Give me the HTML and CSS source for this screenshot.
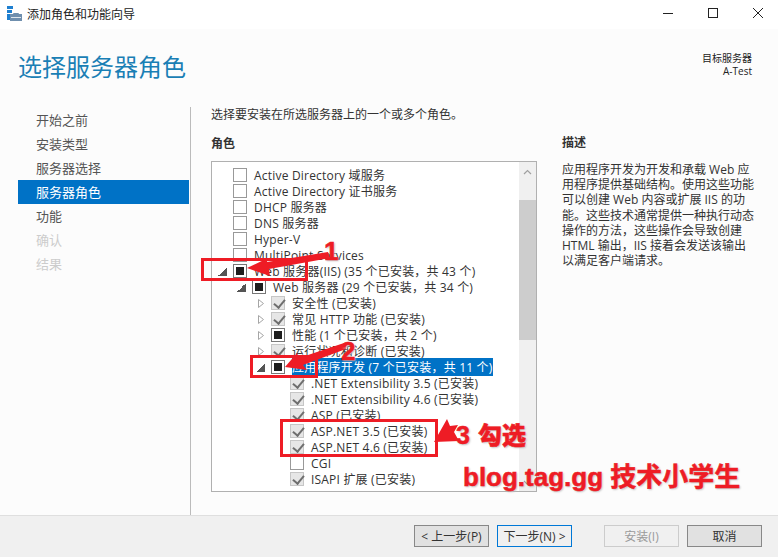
FILE: index.html
```html
<!DOCTYPE html>
<html lang="zh-CN">

<head>
    <meta charset="UTF-8">
    <title>添加角色和功能向导</title>
    <link rel="stylesheet" href="styles.css">
</head>

<body>
    <div class="window">
        <div class="titlebar">
            <svg class="app-icon" width="15" height="15" viewBox="0 0 15 15">
                <rect x="0" y="0" width="6" height="3" fill="#1e7fd0"/>
                <rect x="0" y="4" width="5" height="3" fill="#1e7fd0"/>
                <rect x="0" y="8" width="3" height="6" fill="#1e7fd0"/>
                <rect x="3" y="8" width="12" height="7" fill="#6f8fae"/>
                <path d="M6.5 10 V7.5 H11.5 V10" fill="none" stroke="#6f8fae" stroke-width="1"/>
                <rect x="4" y="11" width="10" height="1" fill="#dfe7ee"/>
            </svg>
            <span class="title-text">添加角色和功能向导</span>
            <div class="win-buttons">
                <svg width="12" height="12" viewBox="0 0 12 12"><path d="M1 6.5 H11" stroke="#222" fill="none"/></svg>
                <svg width="12" height="12" viewBox="0 0 12 12"><rect x="1.5" y="1.5" width="9" height="9" stroke="#222" fill="none"/></svg>
                <svg width="12" height="12" viewBox="0 0 12 12"><path d="M1 1 L11 11 M11 1 L1 11" stroke="#222" fill="none"/></svg>
            </div>
        </div>

        <div class="content">
            <div class="head">
                <h1>选择服务器角色</h1>
                <div class="target">
                    <div>目标服务器</div>
                    <div>A-Test</div>
                </div>
            </div>

            <div class="columns">
                <ul class="nav">
                    <li>开始之前</li>
                    <li>安装类型</li>
                    <li>服务器选择</li>
                    <li class="active">服务器角色</li>
                    <li>功能</li>
                    <li class="off">确认</li>
                    <li class="off">结果</li>
                </ul>

                <div class="main">
                    <p class="intro">选择要安装在所选服务器上的一个或多个角色。</p>
                    <div class="panes">
                        <div class="roles">
                            <h2>角色</h2>
                            <div class="listbox">
                                <div class="rows">
                                    <div class="row"><i class="arrow"></i><i class="box"></i><span>Active Directory 域服务</span></div>
                                    <div class="row"><i class="arrow"></i><i class="box"></i><span>Active Directory 证书服务</span></div>
                                    <div class="row"><i class="arrow"></i><i class="box"></i><span>DHCP 服务器</span></div>
                                    <div class="row"><i class="arrow"></i><i class="box"></i><span>DNS 服务器</span></div>
                                    <div class="row"><i class="arrow"></i><i class="box"></i><span>Hyper-V</span></div>
                                    <div class="row"><i class="arrow"></i><i class="box"></i><span>MultiPoint Services</span></div>
                                    <div class="row"><i class="arrow open"></i><i class="box mixed"></i><span>Web 服务器(IIS) (35 个已安装，共 43 个)</span></div>
                                    <div class="row lv1"><i class="arrow open"></i><i class="box mixed"></i><span>Web 服务器 (29 个已安装，共 34 个)</span></div>
                                    <div class="row lv2"><svg class="closed" width="6" height="9" viewBox="0 0 6 9"><path d="M.5 .5 L5.5 4.5 L.5 8.5 Z" fill="none" stroke="#a6a6a6"/></svg><i class="box checked"></i><span>安全性 (已安装)</span></div>
                                    <div class="row lv2"><svg class="closed" width="6" height="9" viewBox="0 0 6 9"><path d="M.5 .5 L5.5 4.5 L.5 8.5 Z" fill="none" stroke="#a6a6a6"/></svg><i class="box checked"></i><span>常见 HTTP 功能 (已安装)</span></div>
                                    <div class="row lv2"><svg class="closed" width="6" height="9" viewBox="0 0 6 9"><path d="M.5 .5 L5.5 4.5 L.5 8.5 Z" fill="none" stroke="#a6a6a6"/></svg><i class="box mixed"></i><span>性能 (1 个已安装，共 2 个)</span></div>
                                    <div class="row lv2"><svg class="closed" width="6" height="9" viewBox="0 0 6 9"><path d="M.5 .5 L5.5 4.5 L.5 8.5 Z" fill="none" stroke="#a6a6a6"/></svg><i class="box checked"></i><span>运行状况和诊断 (已安装)</span></div>
                                    <div class="row lv2"><i class="arrow open"></i><i class="box mixed"></i><span class="picked">应用程序开发 (7 个已安装，共 11 个)</span></div>
                                    <div class="row lv3"><i class="arrow"></i><i class="box checked"></i><span>.NET Extensibility 3.5 (已安装)</span></div>
                                    <div class="row lv3"><i class="arrow"></i><i class="box checked"></i><span>.NET Extensibility 4.6 (已安装)</span></div>
                                    <div class="row lv3"><i class="arrow"></i><i class="box checked"></i><span>ASP (已安装)</span></div>
                                    <div class="row lv3"><i class="arrow"></i><i class="box checked"></i><span>ASP.NET 3.5 (已安装)</span></div>
                                    <div class="row lv3"><i class="arrow"></i><i class="box checked"></i><span>ASP.NET 4.6 (已安装)</span></div>
                                    <div class="row lv3"><i class="arrow"></i><i class="box"></i><span>CGI</span></div>
                                    <div class="row lv3"><i class="arrow"></i><i class="box checked"></i><span>ISAPI 扩展 (已安装)</span></div>
                                </div>
                                <div class="scrollbar">
                                    <svg class="chev" width="9" height="6" viewBox="0 0 9 6"><path d="M1 5 L4.5 1.5 L8 5" fill="none" stroke="#a0a0a0" stroke-width="1.2"/></svg>
                                    <div class="thumb"></div>
                                    <svg class="chev bottom" width="9" height="6" viewBox="0 0 9 6"><path d="M1 1 L4.5 4.5 L8 1" fill="none" stroke="#a0a0a0" stroke-width="1.2"/></svg>
                                </div>
                            </div>
                        </div>
                        <div class="desc">
                            <h2>描述</h2>
                            <p>应用程序开发为开发和承载 Web 应用程序提供基础结构。使用这些功能可以创建 Web 内容或扩展 IIS 的功能。这些技术通常提供一种执行动态操作的方法，这些操作会导致创建 HTML 输出，IIS 接着会发送该输出以满足客户端请求。</p>
                        </div>
                    </div>
                </div>
            </div>
        </div>

        <div class="footer">
            <button class="btn">&lt; 上一步(P)</button>
            <button class="btn next">下一步(N) &gt;</button>
            <button class="btn gap" disabled>安装(I)</button>
            <button class="btn">取消</button>
        </div>
    </div>

    <!-- red marks painted on top of the screenshot -->
    <div class="mark m1"></div>
    <div class="mark m2"></div>
    <div class="mark m3"></div>
    <svg class="arrows" width="778" height="557" viewBox="0 0 778 557">
        <path d="M247 268 L268 258 L267 262 L328 252 L330 258 L269 269 L270 276 Z" fill="#ee1c25"/>
        <path d="M285 367 L297 353 L299 358 L344 343 L346 349 L303 365 L307 370 Z" fill="#ee1c25"/>
        <path d="M434 442 L447 419 L450 426 L458 425 L454 432 L459 441 Z" fill="#ee1c25"/>
    </svg>
    <span class="note n1">1</span>
    <span class="note n2">2</span>
    <span class="note n3">3<b class="n3-cjk">勾选</b></span>
    <span class="note n4">blog.tag.gg 技术小学生</span>
</body>

</html>
```

FILE: styles.css
```css
* {
    box-sizing: border-box;
}

body {
    margin: 0;
    width: 778px;
    height: 557px;
    overflow: hidden;
    position: relative;
    font-family: "Open Sans", "Noto Sans CJK SC", sans-serif;
    font-size: 12px;
    color: #333;
    background: #fcfcfc;
}

.window {
    height: 557px;
    display: flex;
    flex-direction: column;
}

.titlebar {
    height: 29px;
    flex: none;
    display: flex;
    align-items: center;
    padding: 0 0 2px 7px;
    background: #fff;
    color: #222;
}

.app-icon {
    margin-right: 5px;
}

.win-buttons {
    margin-left: auto;
    display: flex;
    gap: 33px;
    padding-right: 14px;
    margin-bottom: 1px;
}

.content {
    flex: 1;
    min-height: 0;
    padding: 0 0 0 18px;
}

.head {
    display: flex;
    justify-content: space-between;
    height: 78px;
}

h1 {
    margin: 20px 0 0;
    font-size: 24px;
    font-weight: 400;
    line-height: 36px;
    color: #1a7fb5;
}

.target {
    margin: 23px 26px 0 0;
    text-align: right;
    font-size: 10px;
    line-height: 13px;
    color: #222;
}

.columns {
    display: flex;
}

.nav {
    list-style: none;
    margin: 0;
    padding: 1px 0 0;
    width: 173px;
    height: 408px;
    border-right: 1px solid #bbb;
    font-size: 13px;
    color: #555;
}

.nav li {
    height: 24px;
    line-height: 24px;
    padding-left: 18px;
    width: 171px;
}

.nav .active {
    background: #0072c6;
    color: #fff;
}

.nav .off {
    color: #ccc;
}

.main {
    padding: 0 0 0 20px;
}

.intro {
    margin: 0;
    line-height: 16px;
    height: 24px;
}

.panes {
    display: flex;
}

h2 {
    margin: 0;
    font-size: 12px;
    font-weight: 700;
    line-height: 16px;
    color: #333;
}

.roles {
    width: 325px;
    padding-top: 5px;
}

.roles h2 {
    margin-bottom: 9px;
}

.listbox {
    display: flex;
    width: 326px;
    height: 331px;
    border: 1px solid #b0b0b0;
    background: #fff;
    overflow: hidden;
}

.rows {
    flex: 1;
    padding-top: 5px;
    overflow: hidden;
}

.row {
    height: 16px;
    display: flex;
    align-items: center;
    white-space: nowrap;
    padding-left: 6px;
    letter-spacing: 0.2px;
}

.lv1 {
    padding-left: 25px;
}

.lv2 {
    padding-left: 44px;
}

.lv3 {
    padding-left: 63px;
}

.arrow {
    width: 9px;
    height: 9px;
    margin-right: 6px;
    flex: none;
}

.arrow.open {
    background: linear-gradient(135deg, transparent 50%, #555 50%);
}

.closed {
    flex: none;
    margin: 0 7px 0 2px;
}

.box {
    width: 14px;
    height: 14px;
    flex: none;
    margin-right: 7px;
    border: 1px solid #999;
    background: #fff;
    position: relative;
}

.box.mixed {
    border-color: #777;
}

.box.mixed::after {
    content: "";
    position: absolute;
    left: 2px;
    top: 2px;
    width: 8px;
    height: 8px;
    background: #1e1e1e;
}

.box.checked {
    border-color: #c6c6c6;
    background: #e6e6e6;
}

.box.checked::after {
    content: "";
    position: absolute;
    left: 4px;
    top: 0;
    width: 5px;
    height: 9px;
    border: solid #6e6e6e;
    border-width: 0 2px 2px 0;
    transform: rotate(40deg);
}

.picked {
    background: #0072c6;
    color: #fff;
}

.scrollbar {
    width: 17px;
    flex: none;
    background: #f0f0f0;
    display: flex;
    flex-direction: column;
    align-items: center;
    padding: 7px 0 5px;
}

.thumb {
    align-self: stretch;
    height: 140px;
    margin-top: 25px;
    background: #cdcdcd;
}

.chev.bottom {
    margin-top: auto;
}

.desc {
    width: 195px;
    margin-left: 26px;
    padding-top: 4px;
}

.desc h2 {
    margin-bottom: 11px;
}

.desc p {
    margin: 0;
    line-height: 15.2px;
}

.footer {
    height: 42px;
    flex: none;
    display: flex;
    align-items: flex-start;
    padding: 9px 0 0 414px;
    gap: 8px;
    background: #f0f0f0;
    border-top: 1px solid #dfdfdf;
}

.btn {
    width: 75px;
    height: 22px;
    padding: 0;
    font: inherit;
    color: #333;
    background: #e1e1e1;
    border: 1px solid #888;
}

.btn.next {
    border-color: #0078d7;
    background: #f0f0f0;
}

.btn.gap {
    margin-left: 24px;
    background: #f0f0f0;
    border-color: #ccc;
    color: #9a9a9a;
}

/* annotation layer */
.mark {
    position: absolute;
    border: 3px solid #ee1c25;
}

.m1 {
    left: 201px;
    top: 258px;
    width: 107px;
    height: 23px;
}

.m2 {
    left: 250px;
    top: 355px;
    width: 68px;
    height: 23px;
}

.m3 {
    left: 280px;
    top: 419px;
    width: 158px;
    height: 38px;
}

.arrows {
    position: absolute;
    left: 0;
    top: 0;
}

.note {
    position: absolute;
    font-family: "Liberation Sans", "Noto Sans CJK SC", sans-serif;
    font-weight: 700;
    color: #ee1c25;
    white-space: nowrap;
    text-shadow: 1px 1px 2px #bbb;
    -webkit-text-stroke: 0.5px #ee1c25;
}

.n1 {
    left: 324px;
    top: 236px;
    font-size: 26px;
}

.n2 {
    left: 341px;
    top: 336px;
    font-size: 26px;
}

.n3 {
    left: 456px;
    top: 416px;
    font-size: 25px;
}

.n3-cjk {
    margin-left: 8px;
    font-size: 24px;
}

.n4 {
    left: 463px;
    top: 456px;
    font-size: 26px;
}
```
